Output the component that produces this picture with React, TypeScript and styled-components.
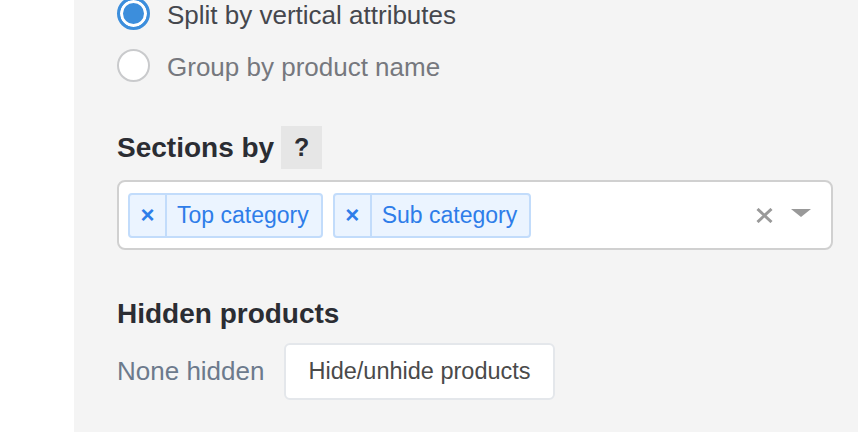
import React, { FC } from 'react'
import styled, { createGlobalStyle } from 'styled-components'

const GlobalStyle = createGlobalStyle`
  html, body {
    margin: 0;
    padding: 0;
    background: #fff;
    font-family: 'Liberation Sans', Arial, sans-serif;
  }
`

type Option = { label: string; checked?: boolean }

const groupingOptions: Option[] = [
  { label: 'Split by vertical attributes', checked: true },
  { label: 'Group by product name' },
]

const sections = ['Top category', 'Sub category']

const App: FC = () => {
  return (
    <>
      <GlobalStyle />
      <Page>
        <Gutter />
        <Panel>
          <RadioGroup>
            {groupingOptions.map((o) => (
              <RadioRow key={o.label}>
                <Radio checked={!!o.checked} />
                <RadioLabel $checked={!!o.checked}>{o.label}</RadioLabel>
              </RadioRow>
            ))}
          </RadioGroup>

          <Heading>
            Sections by <HelpBadge>?</HelpBadge>
          </Heading>
          <MultiSelect>
            <Values>
              {sections.map((s) => (
                <Tag key={s}>
                  <TagRemove>×</TagRemove>
                  <TagLabel>{s}</TagLabel>
                </Tag>
              ))}
            </Values>
            <Controls>
              <ClearIcon viewBox="0 0 17 15">
                <path d="M1.5 1 L15.5 14 M15.5 1 L1.5 14" />
              </ClearIcon>
              <Arrow />
            </Controls>
          </MultiSelect>

          <Heading $spaced>Hidden products</Heading>
          <HiddenRow>
            <Muted>None hidden</Muted>
            <Button>Hide/unhide products</Button>
          </HiddenRow>
        </Panel>
      </Page>
    </>
  )
}

export default App

const Page = styled.div`
  display: flex;
  width: 858px;
  height: 432px;
  overflow: hidden;
`

const Gutter = styled.div`
  width: 74px;
  flex-shrink: 0;
  background: #fff;
`

const Panel = styled.div`
  flex: 1;
  background: #f4f4f4;
  padding: 0 25px 0 43px;
  display: flex;
  flex-direction: column;
`

const RadioGroup = styled.div`
  display: flex;
  flex-direction: column;
  gap: 19px;
  margin-top: -3px;
`

const RadioRow = styled.label`
  display: flex;
  align-items: center;
  gap: 17px;
  height: 33px;
`

const Radio = styled.span<{ checked: boolean }>`
  box-sizing: border-box;
  width: 33px;
  height: 33px;
  border-radius: 50%;
  background: ${(p) => (p.checked ? '#3c8edc' : '#fff')};
  border: ${(p) => (p.checked ? '3px solid #3c8edc' : '2px solid #c9cacc')};
  box-shadow: ${(p) => (p.checked ? 'inset 0 0 0 3px #fff' : 'none')};
  flex-shrink: 0;
`

const RadioLabel = styled.span<{ $checked: boolean }>`
  font-size: 26px;
  line-height: 1;
  padding-top: 2px;
  color: ${(p) => (p.$checked ? '#45474d' : '#76787e')};
`

const Heading = styled.div<{ $spaced?: boolean }>`
  display: flex;
  align-items: center;
  gap: 7px;
  font-size: 28px;
  font-weight: bold;
  color: #2b2d33;
  margin-top: ${(p) => (p.$spaced ? '48px' : '44px')};
`

const HelpBadge = styled.span`
  display: inline-flex;
  align-items: center;
  justify-content: center;
  width: 41px;
  height: 43px;
  background: #e6e6e6;
  font-size: 25px;
`

const MultiSelect = styled.div`
  box-sizing: border-box;
  margin-top: 11px;
  height: 70px;
  background: #fff;
  border: 2px solid #d0d0d0;
  border-radius: 8px;
  display: flex;
  align-items: center;
  padding: 0 20px 0 9px;
`

const Values = styled.div`
  flex: 1;
  display: flex;
  gap: 10px;
`

const Tag = styled.div`
  box-sizing: border-box;
  display: flex;
  height: 45px;
  background: #ebf4ff;
  border: 2px solid #c2dcfb;
  border-radius: 4px;
  color: #2e7de9;
`

const TagRemove = styled.span`
  display: flex;
  align-items: center;
  justify-content: center;
  width: 35px;
  border-right: 2px solid #c2dcfb;
  font-size: 24px;
  font-weight: bold;
`

const TagLabel = styled.span`
  display: flex;
  align-items: center;
  padding: 0 12px 0 10px;
  font-size: 23px;
`

const Controls = styled.div`
  display: flex;
  align-items: center;
  gap: 18px;
`

const ClearIcon = styled.svg`
  width: 17px;
  height: 15px;
  stroke: #999;
  stroke-width: 3;
  fill: none;
`

const Arrow = styled.span`
  width: 0;
  height: 0;
  border-style: solid;
  border-width: 8px 10px 0;
  border-color: #999 transparent transparent;
  margin-top: -4px;
`

const HiddenRow = styled.div`
  display: flex;
  align-items: center;
  gap: 20px;
  margin-top: 13px;
`

const Muted = styled.span`
  font-size: 26px;
  color: #6c7a8c;
`

const Button = styled.button`
  box-sizing: border-box;
  height: 57px;
  padding: 0 22px;
  background: #fff;
  border: 2px solid #e4e7eb;
  border-radius: 6px;
  font-family: inherit;
  font-size: 23.5px;
  color: #4a4a4a;
`
